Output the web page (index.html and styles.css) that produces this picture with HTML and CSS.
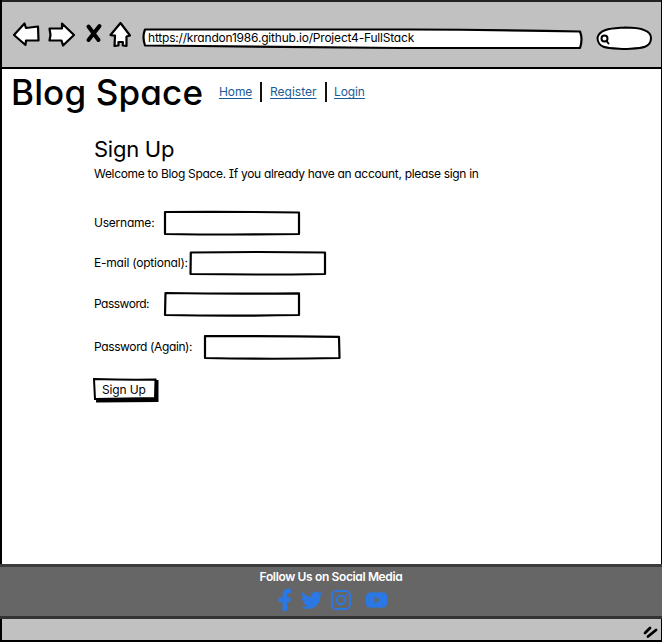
FILE: index.html
```
<!DOCTYPE html>
<html lang="en">
<head>
<meta charset="utf-8">
<title>Blog Space</title>
<link rel="stylesheet" href="styles.css">
</head>
<body>
<div class="browser">
  <header class="toolbar">
    <svg class="controls" width="130" height="32" viewBox="10 19 130 32" fill="#fff" stroke="#000" stroke-width="2.200" stroke-linejoin="round" stroke-linecap="round">
      <path d="M14 35 24.500 23.500 26 28 38 26.500 38.500 40.500 26 40.500 25.500 45Z"/>
      <path d="M49.500 28.500 62 28.500 62 23.500 74 35 63 45.500 61.500 40.500 49.500 40.500 50.500 35Z"/>
      <path d="M112 35.500 110.500 35 120.500 23 130 35.500 126.500 36.500 126.500 46 122.800 45.500 122.800 42 118.500 42 118.500 45.500 114.500 46 115 35.500Z"/>
      <path class="stop" d="M88.500 26.500 98.500 40M99.500 26 88.500 40"/>
    </svg>
    <div class="address">
      <svg width="442" height="24" viewBox="142 26 442 24" fill="#fff" stroke="#000" stroke-width="2.200" stroke-linejoin="round"><path d="M145 29.500Q260 29 410 29.500Q500 30 580 31.500Q583 39 580 48L400 48Q270 47 200 46L145 45.500Q142 37 145 29.500Z"/></svg>
      <span class="url">https://krandon1986.github.io/Project4-FullStack</span>
    </div>
    <svg class="search" width="58" height="26" viewBox="595 25 58 26" fill="#fff" stroke="#000" stroke-width="2" stroke-linecap="round"><path d="M597.500 38C599 28 614 28.500 625 27.500C642 27.500 651 31 651 38C651 49 639 48 625 49C608 48 598 49 597.500 38Z"/><circle cx="604.500" cy="38.500" r="3"/><path d="M606.500 41 608.500 43.500"/></svg>
  </header>
  <div class="masthead">
    <h1 class="brand">Blog Space</h1>
    <nav class="nav">
      <a class="home" href="#">Home</a><span class="bar"></span><a class="register" href="#">Register</a><span class="bar"></span><a class="login" href="#">Login</a>
    </nav>
  </div>
  <main class="signup">
    <h2 class="title">Sign Up</h2>
    <p class="intro">Welcome to Blog Space. If you already have an account, please sign in</p>
    <form>
      <div class="row"><label class="short username">Username:</label><svg class="field" viewBox="0 0 138 26"><path d="M2 2Q70 1.500 136 2.500L136 24Q70 25 2 24Z"/></svg></div>
      <div class="row second"><label class="email">E-mail (optional):</label><svg class="field" viewBox="0 0 138 26"><path d="M1.800 2.500Q70 1.500 136 2.500L136 24Q70 25 1.500 24Z"/></svg></div>
      <div class="row"><label class="short password">Password:</label><svg class="field" viewBox="0 0 138 26"><path d="M2.500 2Q70 3 136 2.300L136 24Q70 25.300 2 24Z"/></svg></div>
      <div class="row last"><label class="again">Password (Again):</label><svg class="field" viewBox="0 0 138 26"><path d="M2 2Q70 2 136 2.800L136.500 24Q70 25.500 2 24Z"/></svg></div>
      <div class="submit">
        <svg width="67" height="26" viewBox="0 0 67 26"><path d="M5 3 66.500 3 66.500 25 4 25.500Z"/><path class="face" d="M2 2Q35 3 63.500 2.500L63 21 3 22Z"/></svg>
        <span class="caption">Sign Up</span>
      </div>
    </form>
  </main>
  <footer class="social">
    <p class="follow">Follow Us on Social Media</p>
    <svg width="112" height="24" viewBox="277 588 112 24" fill="#2b78e4">
      <path d="M282.500 611V602H278.500V597.500H282.500V594.500Q282.500 588.800 288.500 588.800H291V593H289Q287 593 287 595V597.500H290.800L290.200 602H287V611Z"/>
      <path transform="translate(301 589.500) scale(.90)" d="M23.950 4.570a10 10 0 0 1-2.820.77 4.960 4.960 0 0 0 2.160-2.720 9.900 9.900 0 0 1-3.120 1.180 4.920 4.920 0 0 0-8.380 4.480C7.690 8.090 4.070 6.130 1.640 3.160a4.820 4.820 0 0 0-.67 2.480c0 1.710.87 3.210 2.190 4.100a4.900 4.900 0 0 1-2.230-.62v.060a4.920 4.920 0 0 0 3.950 4.830 5 5 0 0 1-2.210.08 4.940 4.940 0 0 0 4.600 3.420A9.870 9.870 0 0 1 0 19.540a13.990 13.990 0 0 0 7.550 2.210c9.050 0 14-7.500 14-13.980l-.020-.63a9.930 9.930 0 0 0 2.420-2.570z"/>
      <g fill="none" stroke="#2b78e4" stroke-width="1.900"><rect x="332" y="591" width="18" height="18" rx="4.500"/><circle cx="341" cy="600" r="4.200"/></g><circle cx="346.300" cy="595" r="1.100"/>
      <path fill-rule="evenodd" d="M369 592.500Q377 592 384 592.500 387 593 387 596 387.500 600 387 604.500 386.500 607 384 607.500 376 608 369 607.500 366 607 366 604 365.500 600 366 596 366.500 593 369 592.500ZM374.500 596.500V603.500L380 600Z"/>
    </svg>
  </footer>
  <div class="status"><svg width="18" height="14" viewBox="0 0 18 14" stroke="#000" stroke-width="2.800" stroke-linecap="round"><path d="M3 8 8 3M6 11.500 14 5"/></svg></div>
</div>
</body>
</html>
```
FILE: styles.css
```
* { box-sizing: border-box; }
body { margin: 0; background: #fff; color: #000; font: 12px/16px Inter, "Liberation Sans", sans-serif; font-feature-settings: "cv11", "cv08"; }
h1, h2, p { margin: 0; font-weight: 400; white-space: nowrap; }
svg { display: block; flex: none; }
.browser { width: 662px; height: 642px; display: flex; flex-direction: column; border-left: 2px solid #000; border-right: 1px solid #000; }
.toolbar { height: 69px; flex: none; display: flex; background: #c1c1c1; border-top: 2px solid #222; border-bottom: 2px solid #000; }
.controls { margin: 17px 0 0 8px; }
.stop { stroke-width: 4; }
.address { display: grid; margin: 24px 0 0 2px; }
.address > * { grid-area: 1 / 1; }
.url { padding: 4px 0 0 6px; white-space: nowrap; letter-spacing: -.2px; }
.search { margin: 23px 0 0 11px; }
.masthead { display: flex; height: 66px; flex: none; padding-left: 9px; }
.brand { width: 208px; font-size: 35px; line-height: 46px; font-weight: 500; letter-spacing: .15px; }
.nav { display: flex; height: 20px; margin-top: 13px; line-height: 20px; }
.nav a { color: #1b5b98; text-underline-offset: 2px; text-decoration-skip-ink: none; }
.home { width: 41px; letter-spacing: -.1px; }
.nav .register { width: 55px; }
.nav .login { margin-left: -1px; letter-spacing: -.1px; }
.bar { width: 2px; height: 20px; background: #111; margin-right: 8px; }
.signup { padding-left: 92px; height: 429px; flex: none; }
.title { font-size: 22px; line-height: 29px; letter-spacing: -.25px; }
.intro { margin-top: 2px; letter-spacing: -.32px; }
.row { display: flex; height: 26px; margin-bottom: 14px; align-items: center; }
.second { margin-bottom: 15px; }
form { padding-top: 28px; }
.row label { white-space: nowrap; letter-spacing: -.22px; }
.short { width: 69px; }
.email { width: 95px; }
.again { width: 109px; }
.row .password { letter-spacing: -.5px; }
.row .again { letter-spacing: -.38px; }
.last { margin-top: 17px; margin-bottom: 17px; }
.field { width: 138px; height: 26px; fill: #fff; stroke: #000; stroke-width: 2.200; stroke-linejoin: round; }
.submit { display: grid; width: 67px; margin-left: -2px; }
.submit > * { grid-area: 1 / 1; }
.face { fill: #fff; stroke: #000; stroke-width: 2; }
.caption { padding: 5px 0 0 10px; letter-spacing: -.15px; }
.social { height: 55px; flex: none; margin: 0 -1px 0 -2px; background: #666; border-top: 3px solid #3c3c3c; border-bottom: 3px solid #333; display: flex; flex-direction: column; align-items: center; color: #fff; }
.follow { font-weight: 600; margin-top: 2px; letter-spacing: -.36px; }
.social svg { margin: 3px 0 0 4px; }
.status { flex: 1; background: #c1c1c1; border-bottom: 2px solid #000; display: flex; justify-content: flex-end; align-items: flex-end; padding: 0 1px 1px 0; }
```
